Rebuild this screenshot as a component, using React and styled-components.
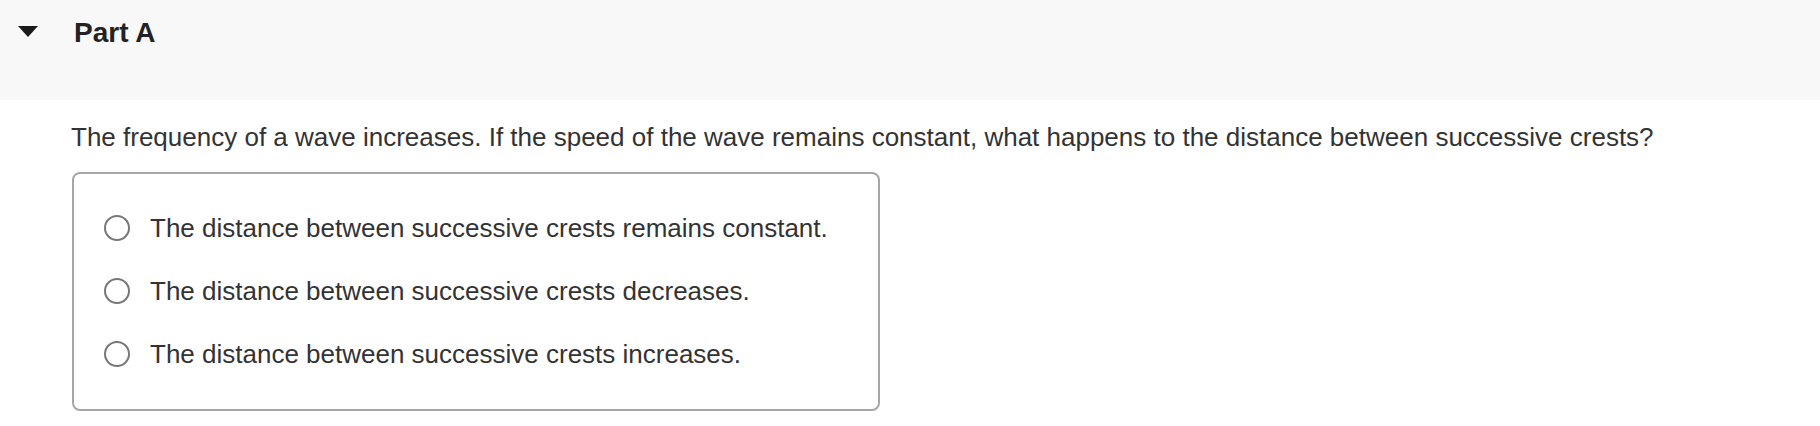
import React from "react";
import styled, { createGlobalStyle } from "styled-components";

const Global = createGlobalStyle`
  html, body { margin: 0; padding: 0; background: #ffffff; }
  body { font-family: "Liberation Sans", Arial, Helvetica, sans-serif; color: #333333; }
`;

const Header = styled.div`
  height: 100px;
  box-sizing: border-box;
  background: #f8f8f8;
  display: flex;
  align-items: flex-start;
  padding: 17px 0 0 18px;
`;

const Caret = styled.svg`
  width: 20px;
  height: 11px;
  margin-top: 9px;
  flex: none;
`;

const Title = styled.h2`
  margin: 0 0 0 36px;
  font-size: 28px;
  line-height: 32px;
  font-weight: 700;
  color: #222222;
`;

const Body = styled.div`
  padding: 22px 0 0 71px;
`;

const Question = styled.p`
  margin: 0 0 20px 0;
  font-size: 26px;
  line-height: 30px;
  color: #333333;
`;

const Choices = styled.div`
  width: 808px;
  box-sizing: border-box;
  border: 2px solid #a6a6a6;
  border-radius: 8px;
  padding: 22px 0 24px 30px;
  margin-left: 1px;
  display: flex;
  flex-direction: column;
`;

const Option = styled.label`
  height: 63px;
  display: flex;
  align-items: center;
  gap: 20px;
  font-size: 26px;
  line-height: 30px;
  color: #333333;
  cursor: pointer;
`;

const Radio = styled.span`
  width: 26px;
  height: 26px;
  box-sizing: border-box;
  border: 2px solid #777777;
  border-radius: 50%;
  background: #ffffff;
  flex: none;
`;

const options = [
  "The distance between successive crests remains constant.",
  "The distance between successive crests decreases.",
  "The distance between successive crests increases.",
];

export default function App() {
  return (
    <>
      <Global />
      <Header>
        <Caret viewBox="0 0 20 11">
          <polygon points="0,0 20,0 10,11" fill="#1a1a1a" />
        </Caret>
        <Title>Part A</Title>
      </Header>
      <Body>
        <Question>
          The frequency of a wave increases. If the speed of the wave remains
          constant, what happens to the distance between successive crests?
        </Question>
        <Choices>
          {options.map((o) => (
            <Option key={o}>
              <Radio />
              <span>{o}</span>
            </Option>
          ))}
        </Choices>
      </Body>
    </>
  );
}
